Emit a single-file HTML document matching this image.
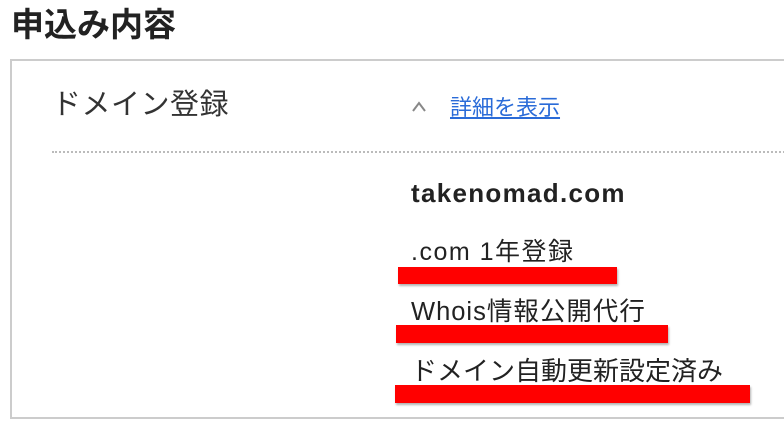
<!DOCTYPE html>
<html><head><meta charset="utf-8"><style>
body{margin:0;width:784px;height:425px;background:#fff;position:relative;overflow:hidden;font-family:"Liberation Sans","Noto Sans CJK JP",sans-serif;color:#222}
.a{position:absolute;white-space:nowrap}
.box{position:absolute;left:10px;top:59px;width:800px;height:356px;border:2px solid #ccc}
.dot{position:absolute;left:52px;top:151px;width:740px;border-top:2px dotted #bbb}
.bar{position:absolute;background:#f00;box-shadow:1px 2px 2px rgba(0,0,0,.3)}
</style></head><body>
<div class="a" style="left:11px;top:6px;font-size:33px;font-weight:bold;line-height:38px">申込み内容</div>
<div class="box"></div>
<div class="a" style="left:52px;top:87px;font-size:29px;line-height:36px;color:#333;letter-spacing:0.5px">ドメイン登録</div>
<svg class="a" style="left:411px;top:100px" width="16" height="14"><path d="M2 11 L8 3 L14 11" fill="none" stroke="#888" stroke-width="2"/></svg>
<div class="a" style="left:450px;top:94px;font-size:22px;line-height:28px;color:#2a6bd8;text-decoration:underline">詳細を表示</div>
<div class="dot"></div>
<div class="a" style="left:411px;top:177px;font-size:26px;font-weight:bold;line-height:32px;letter-spacing:1.3px">takenomad.com</div>
<div class="a" style="left:411px;top:236px;font-size:25px;line-height:32px;letter-spacing:1.5px">.com 1年登録</div>
<div class="bar" style="left:398px;top:267px;width:219px;height:17px"></div>
<div class="a" style="left:411px;top:296px;font-size:25.5px;line-height:32px;letter-spacing:1px">Whois情報公開代行</div>
<div class="bar" style="left:396px;top:325px;width:272px;height:18px"></div>
<div class="a" style="left:411px;top:355px;font-size:26px;line-height:32px">ドメイン自動更新設定済み</div>
<div class="bar" style="left:395px;top:385px;width:355px;height:18px"></div>
</body></html>
